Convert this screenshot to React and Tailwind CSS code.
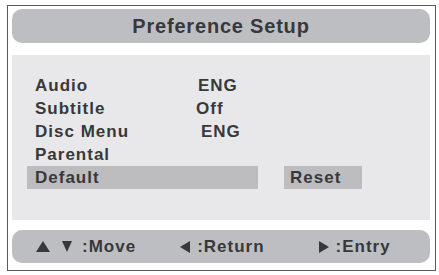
import React from 'react';

const rows = [
  { label: 'Audio', value: 'ENG', gap: 'ml-[63px]' },
  { label: 'Subtitle', value: 'Off', gap: 'ml-[61px]' },
  { label: 'Disc Menu', value: 'ENG', gap: 'ml-[66px]' },
  { label: 'Parental', value: '' },
];

function Tri({ dir, className }) {
  const pts = {
    up: '0,11 7,0 14,11',
    down: '0,0 10,0 5,11',
    left: '10,0 10,12 0,6',
    right: '0,0 10,6 0,12',
  }[dir];
  const w = dir === 'up' ? 14 : 10;
  const h = dir === 'up' || dir === 'down' ? 11 : 12;
  return (
    <svg width={w} height={h} viewBox={`0 0 ${w} ${h}`} className={className}>
      <polygon points={pts} fill="#38383a" />
    </svg>
  );
}

export default function App() {
  return (
    <div className="w-[439px] h-[275px] bg-white pt-[5px] pl-[7px] font-['Liberation_Sans',Arial,sans-serif] font-bold text-[#38383a]">
      <div className="w-[429px] h-[266px] border border-[#5a5a5a] pt-[3px] pl-[4px] flex flex-col">
        {/* title */}
        <div className="w-[418px] h-[34px] rounded-[10px] bg-[#bdbec2] flex items-center justify-center text-[20px] tracking-[0.8px]">
          Preference Setup
        </div>

        {/* options */}
        <div className="mt-[12px] w-[418px] h-[165px] bg-[#e8e8ea] pt-[19px] pl-[15px] text-[17px] tracking-[1px]">
          {rows.map((r) => (
            <div key={r.label} className="h-[23px] flex items-center pl-[8px]">
              <span className="w-[100px] shrink-0">{r.label}</span>
              {r.value && <span className={r.gap}>{r.value}</span>}
            </div>
          ))}
          <div className="h-[23px] flex items-center">
            <div className="w-[231px] h-[23px] bg-[#bdbdbf] flex items-center pl-[8px]">Default</div>
            <div className="ml-[26px] w-[78px] h-[23px] bg-[#bdbdbf] flex items-center pl-[6px]">Reset</div>
          </div>
        </div>

        {/* hints */}
        <div className="mt-[10px] w-[418px] h-[33px] rounded-[10px] bg-[#bdbec2] flex items-center pl-[24px] text-[17px] tracking-[1px]">
          <Tri dir="up" />
          <Tri dir="down" className="ml-[12px]" />
          <span className="ml-[10px]">:Move</span>
          <Tri dir="left" className="ml-[44px]" />
          <span className="ml-[7px]">:Return</span>
          <Tri dir="right" className="ml-[54px]" />
          <span className="ml-[7px]">:Entry</span>
        </div>
      </div>
    </div>
  );
}
